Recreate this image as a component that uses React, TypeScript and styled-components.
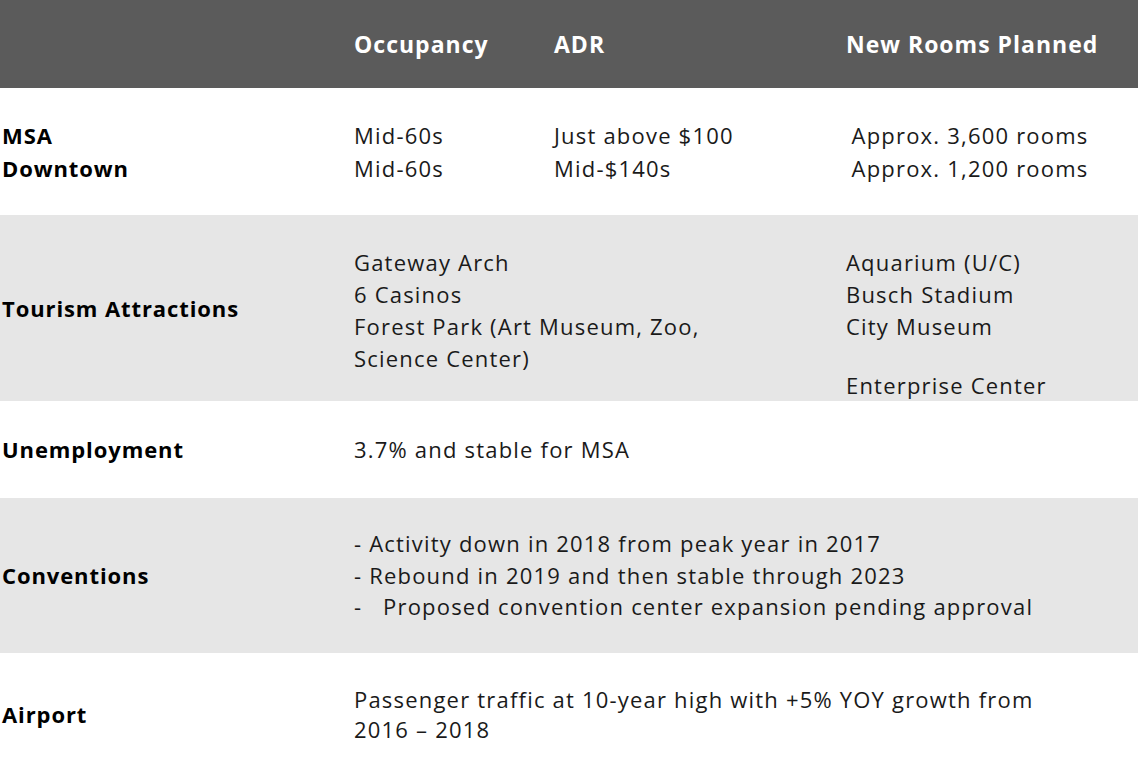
import React from "react";
import styled, { createGlobalStyle } from "styled-components";

const Global = createGlobalStyle`
  html, body { margin: 0; padding: 0; background: #ffffff; }
  body { font-family: "Open Sans", "Liberation Sans", sans-serif; color: #111; }
`;

const Table = styled.div`
  width: 1138px;
  display: flex;
  flex-direction: column;
`;

const Row = styled.div<{ $h: number; $bg: string }>`
  display: grid;
  grid-template-columns: 354px 200px 292px 1fr;
  height: ${(p) => p.$h}px;
  background: ${(p) => p.$bg};
  align-items: center;
  box-sizing: border-box;
`;

const HeadCell = styled.div<{ $center?: boolean }>`
  font-weight: 700;
  font-size: 23px;
  color: #ffffff;
  letter-spacing: 1px;
  white-space: nowrap;
  ${(p) => (p.$center ? "text-align: center; padding-right: 44px;" : "")}
`;

const Label = styled.div`
  padding-left: 2px;
  font-weight: 700;
  font-size: 22px;
  line-height: 33px;
  letter-spacing: 0.9px;
  color: #000;
`;

const Cell = styled.div<{ $span?: number; $center?: boolean; $top?: number; $lh?: number }>`
  grid-column: span ${(p) => p.$span ?? 1};
  font-size: 22px;
  font-weight: 400;
  letter-spacing: 1.2px;
  line-height: ${(p) => p.$lh ?? 33}px;
  color: #1a1a1a;
  white-space: nowrap;
  ${(p) => (p.$center ? "text-align: center; padding-right: 44px;" : "")}
  ${(p) => (p.$top !== undefined ? `align-self: start; padding-top: ${p.$top}px;` : "")}
`;

const Line = styled.div<{ $pre?: boolean }>`
  white-space: ${(p) => (p.$pre ? "pre" : "nowrap")};
`;

const Spacer = styled.div<{ $h: number }>`
  height: ${(p) => p.$h}px;
`;

export default function App() {
  return (
    <>
      <Global />
      <Table>
        <Row $h={88} $bg="#5b5b5b">
          <div />
          <HeadCell>Occupancy</HeadCell>
          <HeadCell>ADR</HeadCell>
          <HeadCell $center>New Rooms Planned</HeadCell>
        </Row>
        <Row $h={127} $bg="#ffffff">
          <Label>
            <Line>MSA</Line>
            <Line>Downtown</Line>
          </Label>
          <Cell>
            <Line>Mid-60s</Line>
            <Line>Mid-60s</Line>
          </Cell>
          <Cell>
            <Line>Just above $100</Line>
            <Line>Mid-$140s</Line>
          </Cell>
          <Cell $center>
            <Line>Approx. 3,600 rooms</Line>
            <Line>Approx. 1,200 rooms</Line>
          </Cell>
        </Row>
        <Row $h={186} $bg="#e6e6e6">
          <Label>Tourism Attractions</Label>
          <Cell $span={2} $top={31} $lh={32}>
            <Line>Gateway Arch</Line>
            <Line>6 Casinos</Line>
            <Line>Forest Park (Art Museum, Zoo,</Line>
            <Line>Science Center)</Line>
          </Cell>
          <Cell $top={31} $lh={32}>
            <Line>Aquarium (U/C)</Line>
            <Line>Busch Stadium</Line>
            <Line>City Museum</Line>
            <Spacer $h={27} />
            <Line>Enterprise Center</Line>
          </Cell>
        </Row>
        <Row $h={97} $bg="#ffffff">
          <Label>Unemployment</Label>
          <Cell $span={3}>3.7% and stable for MSA</Cell>
        </Row>
        <Row $h={155} $bg="#e6e6e6">
          <Label>Conventions</Label>
          <Cell $span={3} $lh={31.5}>
            <Line>- Activity down in 2018 from peak year in 2017</Line>
            <Line>- Rebound in 2019 and then stable through 2023</Line>
            <Line $pre>{"-   Proposed convention center expansion pending approval"}</Line>
          </Cell>
        </Row>
        <Row $h={122} $bg="#ffffff">
          <Label>Airport</Label>
          <Cell $span={3} $lh={30}>
            <Line>Passenger traffic at 10-year high with +5% YOY growth from</Line>
            <Line>2016 – 2018</Line>
          </Cell>
        </Row>
      </Table>
    </>
  );
}
